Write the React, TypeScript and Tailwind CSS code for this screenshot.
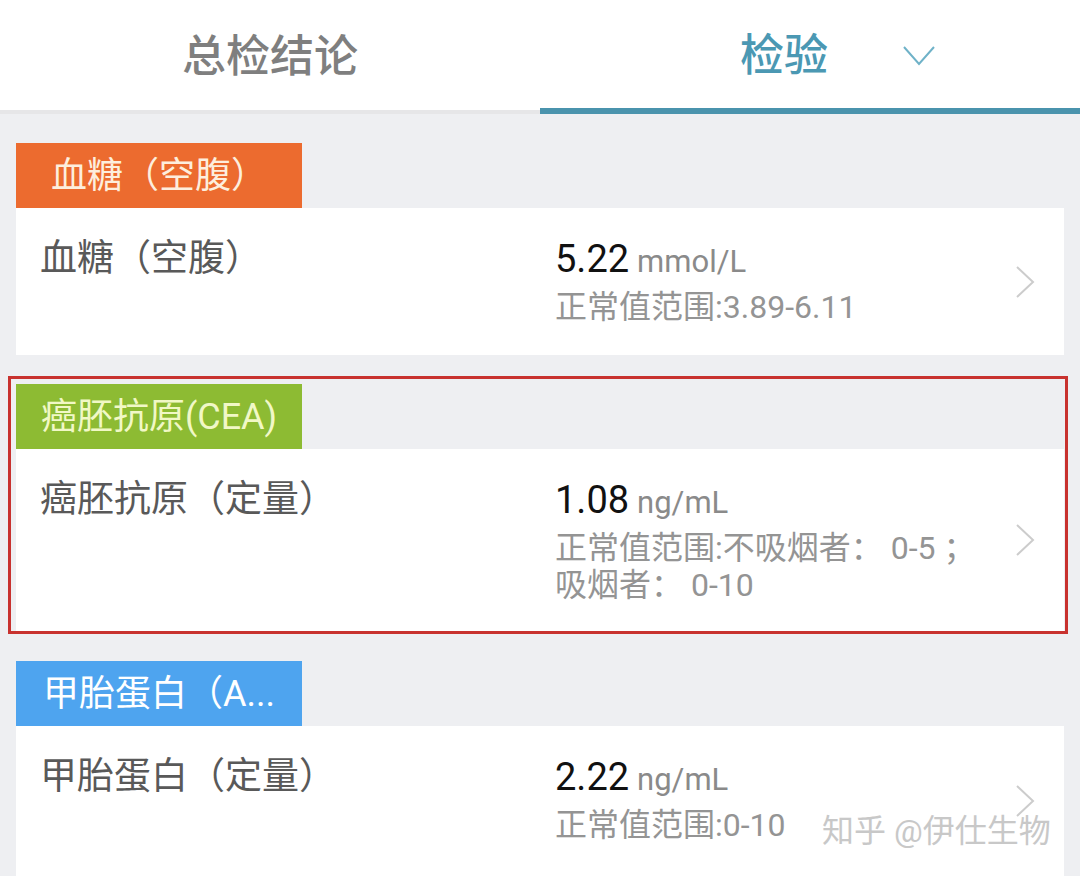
import React from "react";

const font = { fontFamily: "Roboto, 'Noto Sans CJK SC', sans-serif" };

const Chevron = () => (
  <svg width="20" height="34" viewBox="0 0 20 34" className="shrink-0">
    <polyline points="2,2 18,17 2,32" fill="none" stroke="#cccccc" strokeWidth="2" />
  </svg>
);

const Tag = ({ text, className }: any) => (
  <div
    className={`flex h-[65px] w-[286px] items-center justify-center text-[36px] leading-none ${className}`}
  >
    {text}
  </div>
);

const Card = ({ title, value, unit, range, height }: any) => (
  <div className={`flex bg-white ${height}`}>
    <div className="w-[539px] shrink-0 pl-[24px] pt-[29px] text-[37px] leading-[44px] text-[#595959]">
      {title}
    </div>
    <div className="flex-1 pt-[29px]">
      <div className="flex items-baseline leading-[44px]">
        <span className="text-[38px] text-[#111111]">{value}</span>
        <span className="ml-[8px] text-[31px] text-[#8a8a8a]">{unit}</span>
      </div>
      <div className="mt-[5px] text-[32px] leading-[37px] text-[#949494]">{range}</div>
    </div>
    <div className="flex items-center pr-[29px]">
      <Chevron />
    </div>
  </div>
);

export default function App() {
  return (
    <div className="h-[876px] w-[1080px] overflow-hidden bg-[#eeeff2]" style={font}>
      <div className="flex h-[114px] bg-white">
        <div className="flex w-[540px] flex-col">
          <div className="flex flex-1 items-center justify-center pt-[4px] text-[44px] font-medium text-[#7f7f7f]">
            总检结论
          </div>
          <div className="h-[4px] bg-[#e6e6e8]" />
        </div>
        <div className="flex w-[540px] flex-col">
          <div className="flex flex-1 items-center pl-[200px] pt-[4px]">
            <span className="text-[44px] font-medium text-[#4b98b3]">检验</span>
            <svg width="34" height="22" viewBox="0 0 34 22" className="ml-[74px]">
              <polyline points="2,2 17,19 32,2" fill="none" stroke="#6fb2c8" strokeWidth="2" />
            </svg>
          </div>
          <div className="h-[6px] bg-[#4a93ad]" />
        </div>
      </div>

      <div className="mt-[29px] px-[16px]">
        <Tag text="血糖（空腹）" className="bg-[#ec6b2f] text-[#fdeedd]" />
        <Card
          title="血糖（空腹）"
          value="5.22"
          unit="mmol/L"
          range="正常值范围:3.89-6.11"
          height="h-[147px]"
        />
      </div>

      <div className="ml-[8px] mr-[12px] mt-[21px] border-[3px] border-[#c8322f] pl-[5px] pr-[1px] pt-[5px]">
        <Tag text="癌胚抗原(CEA)" className="bg-[#8dbb33] text-[#f1f8c6]" />
        <Card
          title="癌胚抗原（定量）"
          value="1.08"
          unit="ng/mL"
          range={
            <>
              正常值范围:不吸烟者： 0-5 ；
              <br />
              吸烟者： 0-10
            </>
          }
          height="h-[182px]"
        />
      </div>

      <div className="relative mt-[27px] px-[16px]">
        <Tag text="甲胎蛋白（A..." className="bg-[#4ea4ef] text-white" />
        <Card
          title="甲胎蛋白（定量）"
          value="2.22"
          unit="ng/mL"
          range="正常值范围:0-10"
          height="h-[150px]"
        />
        <div className="absolute left-[822px] top-[150px] text-[32px] leading-[40px] text-[#c8c8c8]">
          知乎 @伊仕生物
        </div>
      </div>
    </div>
  );
}
